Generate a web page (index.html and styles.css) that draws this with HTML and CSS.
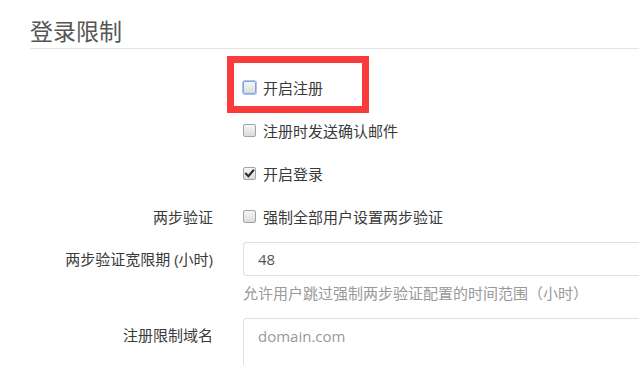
FILE: index.html
```html
<!DOCTYPE html>
<html lang="zh-CN">
<head>
<meta charset="utf-8">
<title>登录限制</title>
<link rel="stylesheet" href="styles.css">
</head>
<body>
<div class="page">
  <h2 class="section-title">登录限制</h2>
  <form class="form">
    <div class="row check-row">
      <div class="label"></div>
      <div class="control">
        <label class="check"><span class="box focus"></span>开启注册</label>
      </div>
    </div>
    <div class="row check-row">
      <div class="label"></div>
      <div class="control">
        <label class="check"><span class="box"></span>注册时发送确认邮件</label>
      </div>
    </div>
    <div class="row check-row">
      <div class="label"></div>
      <div class="control">
        <label class="check"><span class="box checked"><svg viewBox="0 0 13 13" width="13" height="13"><path d="M3 6.8 L5.4 9.2 L10.2 3.6" fill="none" stroke="#2b2b2b" stroke-width="2.1" stroke-linecap="square"/></svg></span>开启登录</label>
      </div>
    </div>
    <div class="row check-row">
      <div class="label">两步验证</div>
      <div class="control">
        <label class="check"><span class="box"></span>强制全部用户设置两步验证</label>
      </div>
    </div>
    <div class="row input-row">
      <div class="label label-input">两步验证宽限期 (小时)</div>
      <div class="control">
        <input class="text-input" type="text" value="48">
        <p class="help">允许用户跳过强制两步验证配置的时间范围（小时）</p>
      </div>
    </div>
    <div class="row area-row">
      <div class="label label-area">注册限制域名</div>
      <div class="control">
        <textarea class="text-area" placeholder="domain.com"></textarea>
      </div>
    </div>
  </form>
  <div class="highlight"></div>
</div>
</body>
</html>
```

FILE: styles.css
```css
html, body {
  margin: 0;
  padding: 0;
  background: #fff;
  overflow: hidden;
}
body {
  width: 639px;
  height: 365px;
  font-family: "Open Sans", "Noto Sans CJK SC", sans-serif;
  font-size: 15px;
  color: #3a3a3a;
}
.page {
  position: relative;
  box-sizing: border-box;
  padding-left: 30px;
  width: 639px;
  height: 365px;
  overflow: hidden;
}
.section-title {
  margin: 0;
  padding-top: 16px;
  padding-bottom: 2px;
  height: 30px;
  line-height: 30px;
  font-size: 23px;
  font-weight: 400;
  color: #555;
  border-bottom: 1px solid #e5e5e5;
}
.form {
  padding-top: 17px;
}
.row {
  display: grid;
  grid-template-columns: 183px 1fr;
  column-gap: 30px;
}
.check-row {
  height: 43px;
  align-items: center;
}
.label {
  text-align: right;
  line-height: 20px;
  color: #3a3a3a;
  white-space: nowrap;
}
.check {
  display: flex;
  align-items: center;
  line-height: 20px;
  color: #3a3a3a;
}
.box {
  box-sizing: border-box;
  width: 13px;
  height: 13px;
  margin-right: 7px;
  border: 1px solid #a3a3a3;
  border-radius: 2px;
  background: linear-gradient(#f6f6f6, #dcdcdc);
  display: inline-flex;
  align-items: center;
  justify-content: center;
  flex: none;
}
.box svg {
  display: block;
  margin: -1px;
}
.box.focus {
  border-color: #7ea5dc;
  box-shadow: 0 0 0 1px #a9c6f0;
}
.control {
  min-width: 0;
}
.input-row {
  margin-top: 4px;
}
.label-input {
  line-height: 34px;
}
.text-input {
  box-sizing: border-box;
  display: block;
  width: 100%;
  height: 34px;
  padding: 6px 14px;
  border: 1px solid #dedede;
  border-right: 0;
  border-radius: 4px 0 0 4px;
  font-family: "Open Sans", "Noto Sans CJK SC", sans-serif;
  font-size: 15px;
  color: #555;
  background: #fff;
  outline: none;
}
.help {
  margin: 7px 0 0;
  line-height: 20px;
  color: #999;
  white-space: nowrap;
}
.area-row {
  margin-top: 15px;
}
.label-area {
  padding-top: 7px;
}
.text-area {
  box-sizing: border-box;
  display: block;
  width: 100%;
  height: 47px;
  padding: 7px 14px;
  border: 1px solid #dedede;
  border-right: 0;
  border-bottom: 0;
  border-radius: 4px 0 0 0;
  font-family: "Open Sans", "Noto Sans CJK SC", sans-serif;
  font-size: 15px;
  line-height: 20px;
  color: #555;
  resize: none;
  outline: none;
}
.text-area::placeholder {
  color: #999;
}
.highlight {
  position: absolute;
  left: 227px;
  top: 56px;
  width: 142px;
  height: 57px;
  box-sizing: border-box;
  border: 7px solid #fb3b3b;
}
```
